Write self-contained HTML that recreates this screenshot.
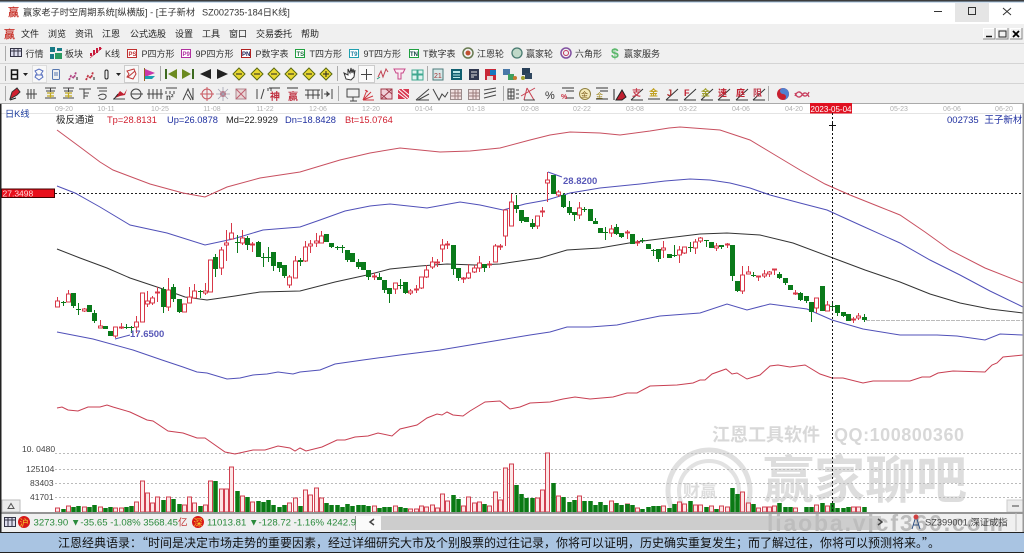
<!DOCTYPE html>
<html lang="zh"><head><meta charset="utf-8"><title>赢家老子时空周期系统</title>
<style>
html,body{margin:0;padding:0;background:#fff;width:1024px;height:553px;overflow:hidden}
svg{display:block;font-family:"Liberation Sans","Noto Sans CJK SC",sans-serif}
.m{font-size:9px;fill:#222}
.t{font-size:9px;fill:#333}
.d{font-size:7px;fill:#b0b0b0}
.i{fill:none;stroke:#444;stroke-width:1}
.r{fill:none;stroke:#c83040;stroke-width:1}
</style></head><body>
<svg width="1024" height="553" viewBox="0 0 1024 553" xmlns="http://www.w3.org/2000/svg">
<rect width="1024" height="553" fill="#fff"/>
<!-- title -->
<rect width="1024" height="1.5" fill="#3c3c3c"/><rect y="1.5" width="1024" height="1" fill="#9dbbd8"/>
<rect x="955" y="3" width="34" height="19" fill="#e5e5e5"/>
<path d="M934 11.5h8" stroke="#333"/><rect x="968.500" y="7.500" width="7" height="7" fill="none" stroke="#333"/><path d="M1003 8l8 7M1011 8l-8 7" stroke="#333" fill="none"/>
<text x="8" y="16" font-size="11" font-weight="700" fill="#c8342c">赢</text>
<text x="23" y="15.500" font-size="9.200" fill="#333">赢家老子时空周期系统[纵横版] - [王子新材</text>
<text x="202" y="15.500" font-size="9.200" fill="#333">SZ002735-184日K线]</text>
<!-- menu & toolbars -->
<rect y="24" width="1024" height="79.500" fill="#f0f0f0"/>
<path d="M0 43.500H1024M0 63.500H1024M0 83.500H1024" stroke="#d4d4d4"/><path d="M0 103.500H1024" stroke="#aaa"/>
<text x="4" y="38" font-size="11" font-weight="700" fill="#c8342c">赢</text>
<text class="m" y="37"><tspan x="21">文件</tspan><tspan x="48">浏览</tspan><tspan x="75">资讯</tspan><tspan x="102">江恩</tspan><tspan x="130">公式选股</tspan><tspan x="175">设置</tspan><tspan x="202">工具</tspan><tspan x="229">窗口</tspan><tspan x="256">交易委托</tspan><tspan x="301">帮助</tspan></text>
<g fill="#f2f2f2"><rect x="983" y="28" width="12" height="11"/><rect x="996" y="28" width="12" height="11"/><rect x="1010" y="28" width="12" height="11"/></g>
<path d="M983.500 39V28.500H995M996.500 39V28.500H1008M1010.500 39V28.500H1022" stroke="#fff" fill="none"/>
<path d="M983 39h12V28M996 39h12V28M1010 39h12V28" stroke="#888" fill="none"/>
<path d="M986 36.500h6" stroke="#111" stroke-width="1.500"/><rect x="999" y="31" width="7" height="6" fill="none" stroke="#222"/><path d="M1013 31l6 6M1019 31l-6 6" stroke="#000" stroke-width="1.800"/>
<!-- toolbar 1 -->
<path d="M5.500 46V61M5.500 66V81M5.500 86V101" stroke="#aaa"/>
<rect x="10.500" y="48.500" width="11" height="8" fill="#dde" stroke="#334"/><path d="M11 51h10M14 49v7M18 49v7" stroke="#334"/>
<rect x="50" y="47" width="5" height="5" fill="#187a86"/><rect x="57" y="48" width="5" height="3" fill="#187a86"/><rect x="50" y="54" width="4" height="5" fill="#187a86"/><rect x="55" y="53" width="7" height="6" fill="#2a9a60"/>
<path d="M91 56V53M94 55V50M97 53V48M100 50V47" stroke="#c81c3c" stroke-width="2"/><path d="M90 58L102 48" stroke="#c81c3c" stroke-width=".6"/>
<g font-size="6" font-weight="700">
<rect x="127.500" y="49.500" width="9" height="8" fill="#fff" stroke="#c03030"/><text x="128.500" y="56" fill="#c03030">PS</text>
<rect x="181.500" y="49.500" width="9" height="8" fill="#fff" stroke="#b030a0"/><text x="182.500" y="56" fill="#b030a0">P9</text>
<rect x="241.500" y="49.500" width="9" height="8" fill="#fff" stroke="#b02020"/><text x="242" y="56" fill="#1a1a50">PN</text>
<rect x="295.500" y="49.500" width="9" height="8" fill="#fff" stroke="#20a040"/><text x="296.500" y="56" fill="#207040">TS</text>
<rect x="349.500" y="49.500" width="9" height="8" fill="#fff" stroke="#20a0b0"/><text x="350.500" y="56" fill="#2080a0">T9</text>
<rect x="409.500" y="49.500" width="9" height="8" fill="#fff" stroke="#20a040"/><text x="410" y="56" fill="#104040">TN</text>
</g>
<circle cx="468" cy="53" r="5" fill="none" stroke="#687a50" stroke-width="1.500"/><circle cx="468" cy="53" r="2.500" fill="#c05030"/>
<circle cx="517" cy="53" r="5" fill="#bfd8c8" stroke="#487a70" stroke-width="1.300"/>
<circle cx="566" cy="53" r="5" fill="none" stroke="#8050a0" stroke-width="1.500"/><circle cx="566" cy="53" r="2.500" fill="none" stroke="#c03060"/>
<text x="611" y="58" font-size="14" font-weight="700" fill="#5cb86c">$</text>
<text class="t" y="57"><tspan x="25.500">行情</tspan><tspan x="65">板块</tspan><tspan x="105">K线</tspan><tspan x="141.500">P四方形</tspan><tspan x="195.500">9P四方形</tspan><tspan x="255.500">P数字表</tspan><tspan x="309.500">T四方形</tspan><tspan x="363.500">9T四方形</tspan><tspan x="423">T数字表</tspan><tspan x="477">江恩轮</tspan><tspan x="526">赢家轮</tspan><tspan x="575">六角形</tspan><tspan x="624">赢家服务</tspan></text>
<!-- toolbar 2 -->
<rect x="32.500" y="65.500" width="14" height="17" fill="#f8f8f8" stroke="#ddd"/>
<rect x="124.500" y="65.500" width="14" height="17" fill="#f8f8f8" stroke="#ccc"/>
<rect x="358.500" y="65.500" width="16" height="17" fill="#fafafa" stroke="#ccc"/>
<path d="M11.500 70h6v9h-6zM11.500 74.500h6" fill="none" stroke="#111" stroke-width="1.500"/>
<path d="M23 73h5l-2.500 3z" fill="#222"/><path d="M116 73h5l-2.500 3z" fill="#222"/>
<path d="M35 71l4-2 4 2-2 3 2 3-4 3-4-3 2-3z" fill="none" stroke="#5870c0"/><path d="M35 75h8" stroke="#5870c0"/>
<rect x="52.500" y="69.500" width="7" height="10" rx="1" fill="none" stroke="#5878b0"/><path d="M54 73h4M54 75h4" stroke="#5878b0"/>
<path d="M69 80l2-4 3 2 2-6" fill="none" stroke="#b04080" stroke-width="1.800" stroke-dasharray="2 1"/><path d="M77 80v-3" stroke="#222"/>
<path d="M86 80l2-4 3 2 2-6" fill="none" stroke="#c03040" stroke-width="1.800" stroke-dasharray="2 1"/><path d="M94 80v-3" stroke="#222"/>
<rect x="105" y="70" width="3" height="9" rx="1.500" fill="none" stroke="#222"/>
<path d="M127 71l7-2 2 5-3 5-6-2 2-3zM128 77l7-6" fill="none" stroke="#c03838"/>
<path d="M144.500 68V81" stroke="#906020"/><path d="M145 69l10 4-10 4z" fill="#c838a8"/><path d="M145 76h10l-3 3h-7z" fill="#18a0b0"/>
<path d="M160.500 66V81M337.500 66V81M427.500 66V81" stroke="#aaa"/>
<path d="M166 69v10" stroke="#3d6a20" stroke-width="2"/><path d="M177 69v10l-9-5z" fill="#6c8a20"/>
<path d="M193 69v10" stroke="#3d6a20" stroke-width="2"/><path d="M182 69v10l9-5z" fill="#6c8a20"/>
<path d="M211 69v10l-11-5z" fill="#222"/><path d="M217 69v10l11-5z" fill="#222"/>
<g fill="#e8d830" stroke="#5a6a10"><path d="M239 68l6 6-6 6-6-6z"/><path d="M257 68l6 6-6 6-6-6z"/><path d="M274 68l6 6-6 6-6-6z"/><path d="M291 68l6 6-6 6-6-6z"/><path d="M309 68l6 6-6 6-6-6z"/><path d="M326 68l6 6-6 6-6-6z"/></g>
<path d="M236 74h6M254 74h6M271 74h6M288 74h6M306 74h6M326 71v6M323 74h6" stroke="#222"/>
<path d="M344 73l2 6 5 1 3-3 1-7-1 3-1-4-1 4-1-5-1 5-2-4v6z" fill="#fff" stroke="#333"/>
<path d="M361 74.500h11M366.500 69v11" stroke="#444"/>
<path d="M378 77l3-6 2 6 3-8 2 3" fill="none" stroke="#c04050"/><path d="M377 79l3-2" stroke="#2a9a80"/>
<path d="M394 69h11l-2 4h-2v6h-3v-6h-2z" fill="#fbeaf2" stroke="#c84888"/>
<path d="M412 70h5v4h-5zM418 70h5v4h-5zM412 75h5v5h-5zM418 75h5v5h-5z" fill="#e0f4f0" stroke="#40a890"/>
<rect x="433" y="69" width="10" height="11" fill="#d8e8e8" stroke="#4a7a7a"/><text x="434" y="78" font-size="7" fill="#a03030">21</text>
<rect x="451" y="69" width="11" height="11" fill="#106070"/><rect x="453" y="71" width="7" height="2" fill="#b8e8e8"/><path d="M453 75h7M453 77.500h7" stroke="#b8e8e8"/>
<rect x="469" y="69" width="10" height="11" fill="#303850"/><path d="M471 72h6M471 75h6M471 77h3" stroke="#e0e0e0"/>
<rect x="485" y="69" width="11" height="11" fill="#c82838"/><rect x="490" y="70" width="6" height="5" fill="#1878c0"/><rect x="487" y="76" width="6" height="4" fill="#e8d8d8"/>
<rect x="503" y="69" width="7" height="6" fill="#4878a8"/><rect x="508" y="74" width="6" height="6" fill="#40a060"/><circle cx="515" cy="78" r="2" fill="#c87830"/>
<rect x="522" y="68" width="8" height="7" fill="#284058"/><rect x="525" y="73" width="7" height="6" fill="#304860"/><circle cx="523" cy="78" r="2" fill="#a0a030"/>
<!-- toolbar 3 -->
<path d="M10 99l2-7 5-4 3 4-3 3z" fill="#d02030" stroke="#333"/><path d="M10 100l6-2" stroke="#222"/>
<g class="i"><path d="M28 89v10M31 89v10M34 89v10M26 94h11"/>
<path d="M45 88h11M46 91h9M50.500 88v4M45 98h11"/><path d="M63 88h11M64 91h9M68.500 88v4M63 98h11"/>
<path d="M79 89h12M84 89v10M84 93h5M84 96h4"/><path d="M97 88h10M99 91h8M98 96c4-3 9-2 8 1s-5 3-7 1"/>
<path d="M113 99h12"/><path d="M131 94h12"/><circle cx="136" cy="94" r="5"/>
<path d="M149 89v10M153 89v10M157 89v10M161 89v10M147 94h16"/>
<path d="M166 88h11M166 91v3M170 91v3M174 91v3"/><path d="M183 100l5-11 5 11M187 94l4 6M193 88v12"/>
<path d="M257 89v10M264 89l-3 10M268 88v3M271 88v3"/>
<path d="M305 90h15M308 90v9M313 90v9M318 90v9M305 95h15"/><path d="M322 89v10M332 89v10M324 94h6M329 94l-2-2v4z"/>
<path d="M347 89h12v8h-12zM353 97v4M350 101h7"/>
<path d="M416 100l13-11M418 100l11-6M416 100h13"/><path d="M433 89l6 11 3-6 3 3 3-5"/>
<path d="M484 90l12-2M484 94l12-3M484 98l12-3"/><path d="M503.500 86V101" stroke="#aaa"/>
<path d="M508 89h6v10h-6zM508 92h6M508 96h6M511 89v10M516 90h3M516 94h3M516 98h3"/></g>
<g fill="none" stroke="#c0a820" stroke-width="1.200"><path d="M47 93h7M50.500 93v5M47 96h7"/><path d="M65 93h7M68.500 93v5M65 96h7"/></g>
<path d="M115 98l5-7 4 3 3-5-2 6-5 1z" fill="#c02030"/><path d="M118 94l-4 5" stroke="#222"/>
<text x="166" y="100" font-size="8" font-weight="700" fill="#444">n²</text>
<circle cx="207" cy="94" r="5" fill="none" stroke="#c85860"/><path d="M200 94h14M207 87v14" stroke="#c85860"/>
<circle cx="223" cy="94" r="3" fill="#c86070"/><path d="M218 89l10 10M228 89l-10 10M216 94h14M223 87v14" stroke="#a0a0b0" stroke-width=".8"/>
<rect x="236" y="89" width="10" height="10" fill="#e8d8d8" stroke="#b08890"/><path d="M236 89l10 10M246 89l-10 10" stroke="#c06070"/>
<g font-size="10" font-weight="700" fill="#c03040"><text x="270" y="100">神</text><text x="288" y="100">赢</text></g>
<path d="M269 88h11M287 88h11" stroke="#333"/>
<path d="M363 100l4-10M363 100l8-8M363 100l10-4M363 100h11M365 90l3 2" stroke="#d03840" fill="none"/>
<rect x="381" y="89" width="11" height="10" fill="#f0d0d8" stroke="#a03848"/><path d="M381 99l11-10M381 94l6 5M386 89l6 5" stroke="#a03848"/>
<rect x="398" y="89" width="11" height="10" fill="#d83850"/><path d="M398 89l11 10M398 93l8 6M402 89l7 6" stroke="#fff"/>
<g fill="#f0e0e0" stroke="#9a8a8a"><rect x="450.500" y="89.500" width="11" height="10"/><rect x="468.500" y="89.500" width="11" height="10"/></g>
<path d="M451 93h10M451 96h10M455 90v9M458 90v9M469 93h10M469 96h10M473 90v9M476 90v9" stroke="#9a7a7a"/>
<path d="M527 88l-3 12M527 88l7 12M521 96l14-8" fill="none" stroke="#c84050"/><path d="M524 100h11" stroke="#444"/>
<text x="545" y="99" font-size="11" fill="#333">%</text>
<path d="M562 88h12M566 91h8M566 98h8" stroke="#333"/><text x="561" y="99" font-size="7" font-weight="700" fill="#c83040">%</text>
<circle cx="585" cy="94" r="5.500" fill="#f4eab8" stroke="#908040"/><text x="581" y="97" font-size="7" fill="#806020">金</text>
<path d="M596 88h12M600 91h8M596 99h12" stroke="#333"/><text x="596" y="98" font-size="7" fill="#a08820">金</text>
<path d="M614 89v11M616 100l6-10 4 7-4 3z" fill="#c02030" stroke="#222"/>
<g fill="none" stroke="#333"><path d="M631 100l12-11M631 100h12"/><path d="M648 99h12"/><path d="M666 100l12-11M666 100h12"/><path d="M684 100l12-11M684 100h12"/><path d="M701 100l12-11M701 100h12"/><path d="M718 100l12-11M718 100h12"/><path d="M736 100l12-11M736 100h12"/><path d="M753 100l12-11M753 100h12"/></g>
<g font-size="9" font-weight="700"><text x="632" y="96" fill="#c84050">支</text><text x="649" y="96" fill="#c0a020">金</text><text x="667" y="96" fill="#b03030">J</text><text x="684" y="96" fill="#c02030">F</text><text x="701" y="96" fill="#a0a030">金</text><text x="718" y="96" fill="#c02030">速</text><text x="736" y="96" fill="#c02030">庭</text><text x="753" y="96" fill="#c04050">阻</text></g>
<path d="M768.500 86V101" stroke="#aaa"/><path d="M338.500 86V101" stroke="#aaa"/>
<circle cx="783" cy="94" r="6" fill="#c82030"/><path d="M783 88a6 6 0 0 1 0 12a3 3 0 0 0 0-6a3 3 0 0 1 0-6" fill="#5080d0"/>
<path d="M795 96c2-5 5-5 7-2s5 3 7-2M795 93c2 5 5 5 7 2s5-3 7 2" fill="none" stroke="#c84060" stroke-width="1.300"/>
<!-- date axis -->
<g class="d" text-anchor="middle"><text x="64" y="111">09-20</text><text x="106" y="111">10-11</text><text x="160" y="111">10-25</text><text x="212" y="111">11-08</text><text x="265" y="111">11-22</text><text x="318" y="111">12-06</text><text x="371" y="111">12-20</text><text x="424" y="111">01-04</text><text x="476" y="111">01-18</text><text x="530" y="111">02-08</text><text x="582" y="111">02-22</text><text x="635" y="111">03-08</text><text x="688" y="111">03-22</text><text x="741" y="111">04-06</text><text x="794" y="111">04-20</text><text x="899" y="111">05-23</text><text x="952" y="111">06-06</text><text x="1004" y="111">06-20</text></g>
<path d="M0 113.500H1024" stroke="#e4e4e4"/>
<rect x="810" y="103" width="42" height="10.500" fill="#e01020"/><text x="810.500" y="112" font-size="8.500" fill="#fff" textLength="41" lengthAdjust="spacingAndGlyphs">2023-05-04</text>
<!-- headers -->
<text x="5" y="117" font-size="9.200" fill="#2040a0">日K线</text>
<text x="56" y="123" font-size="9.500" fill="#222">极反通道</text>
<g font-size="9.300"><text x="107" y="123" fill="#d02030">Tp=28.8131</text><text x="167" y="123" fill="#2030a0">Up=26.0878</text><text x="226" y="123" fill="#222">Md=22.9929</text><text x="285" y="123" fill="#2030a0">Dn=18.8428</text><text x="345" y="123" fill="#d02030">Bt=15.0764</text></g>
<text x="947" y="123" font-size="9.500" fill="#2030a0">002735 <tspan dx="3">王子新材</tspan></text>
<!-- watermark -->
<text x="712" y="441" font-size="18" font-weight="700" fill="#d8d8d8">江恩工具软件</text><text x="834" y="441" font-size="18" font-weight="700" fill="#d8d8d8" textLength="130">QQ:100800360</text>
<text x="763" y="498" font-size="51" font-weight="700" fill="#dddddd">赢家聊吧</text>
<circle cx="709" cy="491" r="41" fill="none" stroke="#e0e0e0" stroke-width="5"/><circle cx="709" cy="491" r="30" fill="none" stroke="#e2e2e2" stroke-width="4"/>
<text x="683" y="497" font-size="17" font-weight="700" fill="#dddddd">财赢</text>
<!-- grid lines -->
<g fill="none" stroke="#bbb" stroke-dasharray="2 2"><path d="M55 453.500H1024M55 469.500H1024M55 483.500H1024M55 497.500H1024"/></g>
<path d="M866 320.500H1024" stroke="#bbb" stroke-dasharray="4 1"/>
<path d="M55 193.500H1024" stroke="#222" stroke-dasharray="2 2"/>
<rect x="1.500" y="189" width="53" height="8.500" fill="#e8101c" stroke="#400"/><text x="2.500" y="196.500" font-size="8.500" fill="#ffd8d8">27.3498</text>
<g font-size="8.500" fill="#444"><text x="22" y="452">10. 0480</text><text x="26" y="472">125104</text><text x="30" y="486">83403</text><text x="30" y="500">41701</text></g>
<!-- bands -->
<g fill="none" stroke-width="1">
<path stroke="#c85060" d="M57 130L80 147 100 162 113 170 150 184 183 193 205 197 227 187 260 178 300 172 340 160 370 153 400 148 420 150 440 152 470 151 500 148 530 140 550 135 570 132 600 133 620 135 650 131 669 128 680 127 720 130 750 140 775 155 800 170 825 184 850 195 880 207 900 215 925 232 950 250 985 268 1023 283"/>
<path stroke="#5050b8" d="M57 186L75 193 100 207 130 225 167 233 205 245 233 239 263 230 300 227 320 220 345 211 370 206 390 204 427 208 460 202 480 205 503 210 525 204 547 200 570 193 600 188 640 184 665 181 690 179 710 180 730 183 750 188 770 195 800 203 827 210 860 225 900 243 930 260 960 275 990 291 1023 307"/>
<path stroke="#333" d="M57 249L80 258 107 268 130 278 160 288 185 297 207 300 235 296 260 292 300 291 335 282 367 275 390 269 420 266 447 264 475 265 500 264 520 261 540 258 567 250 600 248 635 242 667 238 700 234 727 233 760 235 793 243 833 258 865 270 900 282 930 294 960 303 990 309 1023 313"/>
<path stroke="#5050b8" d="M57 332L93 339 133 350 162 360 183 367 197 372 207 373 227 379 240 378 253 375 267 374 278 372 293 374 300 372 320 370 335 364 363 360 400 355 440 350 470 345 500 340 530 335 550 332 567 327 590 327 617 325 640 320 660 316 700 313 727 304 747 310 770 304 807 309 832 320 863 329 900 335 937 335 957 336 985 340 1000 334 1023 335"/>
<path stroke="#c83f52" d="M57 408L62 407 68 410 78 411 88 407 100 407 107 405 113 407 130 412 147 420 153 421 168 431 183 433 197 438 205 438 225 452 235 454 253 450 265 450 278 446 290 448 295 451 300 448 306 451 322 447 337 440 345 440 355 437 368 436 378 433 392 436 400 429 417 425 427 418 437 414 442 415 447 412 453 415 463 416 470 411 485 402 500 401 510 409 520 407 530 403 550 402 563 399 575 397 590 399 613 397 627 393 637 393 650 386 677 385 693 383 700 380 705 380 712 374 726 369 732 374 737 373 747 379 760 375 770 366 778 365 790 367 805 365 820 374 832 378 843 378 863 383 873 381 910 381 922 377 930 377 938 373 953 371 985 372 992 365 997 363 1003 357 1023 355"/>
</g>
<!-- volume -->
<path fill="#fde6e6" stroke="#d04050" d="M55.500 508h4V512h-4zM66.500 506h4V512h-4zM82.500 507h4V512h-4zM98.500 507h4V512h-4zM113.500 508h4V512h-4zM119.500 508h4V512h-4zM134.500 502h4V512h-4zM140.500 481h4V512h-4zM145.500 493h4V512h-4zM150.500 503h4V512h-4zM155.500 497h4V512h-4zM166.500 497h4V512h-4zM182.500 505h4V512h-4zM187.500 497h4V512h-4zM192.500 503h4V512h-4zM203.500 505h4V512h-4zM208.500 481h4V512h-4zM219.500 489h4V512h-4zM224.500 489h4V512h-4zM229.500 467h4V512h-4zM240.500 496h4V512h-4zM250.500 502h4V512h-4zM287.500 503h4V512h-4zM293.500 498h4V512h-4zM303.500 490h4V512h-4zM308.500 495h4V512h-4zM314.500 488h4V512h-4zM319.500 498h4V512h-4zM372.500 506h4V512h-4zM393.500 506h4V512h-4zM408.500 509h4V512h-4zM414.500 509h4V512h-4zM419.500 506h4V512h-4zM424.500 507h4V512h-4zM430.500 505h4V512h-4zM435.500 508h4V512h-4zM440.500 494h4V512h-4zM445.500 501h4V512h-4zM461.500 506h4V512h-4zM466.500 497h4V512h-4zM472.500 503h4V512h-4zM477.500 502h4V512h-4zM487.500 506h4V512h-4zM493.500 492h4V512h-4zM498.500 500h4V512h-4zM503.500 468h4V512h-4zM509.500 464h4V512h-4zM535.500 498h4V512h-4zM540.500 490h4V512h-4zM545.500 453h4V512h-4zM556.500 496h4V512h-4zM577.500 496h4V512h-4zM609.500 501h4V512h-4zM625.500 504h4V512h-4zM635.500 508h4V512h-4zM661.500 506h4V512h-4zM677.500 502h4V512h-4zM682.500 504h4V512h-4zM693.500 505h4V512h-4zM698.500 505h4V512h-4zM709.500 506h4V512h-4zM719.500 506h4V512h-4zM725.500 507h4V512h-4zM740.500 492h4V512h-4zM746.500 503h4V512h-4zM756.500 508h4V512h-4zM762.500 507h4V512h-4zM767.500 507h4V512h-4zM772.500 506h4V512h-4zM793.500 508h4V512h-4zM814.500 505h4V512h-4zM825.500 506h4V512h-4zM851.500 507h4V512h-4zM856.500 507h4V512h-4z"/>
<path fill="none" stroke="#0a7a14" stroke-width="4.500" d="M63.500 509V512M73.500 507V512M78.500 506V512M89.500 507V512M94.500 505V512M105.500 508V512M110.500 507V512M126.500 507V512M131.500 506V512M163.500 500V512M173.500 499V512M179.500 504V512M200.500 506V512M215.500 481V512M237.500 491V512M247.500 497V512M258.500 501V512M263.500 502V512M268.500 500V512M273.500 505V512M279.500 507V512M284.500 505V512M300.500 506V512M326.500 503V512M331.500 505V512M337.500 505V512M342.500 507V512M347.500 504V512M352.500 506V512M358.500 505V512M363.500 505V512M368.500 506V512M379.500 508V512M384.500 507V512M389.500 507V512M400.500 507V512M405.500 508V512M453.500 495V512M458.500 499V512M484.500 504V512M516.500 485V512M521.500 494V512M526.500 498V512M532.500 498V512M553.500 483V512M563.500 497V512M569.500 502V512M574.500 500V512M584.500 501V512M590.500 501V512M595.500 505V512M600.500 502V512M605.500 505V512M616.500 503V512M621.500 505V512M627.500 504V512M632.500 505V512M642.500 509V512M648.500 507V512M653.500 506V512M658.500 506V512M669.500 508V512M674.500 504V512M690.500 501V512M706.500 507V512M716.500 509V512M732.500 488V512M737.500 494V512M753.500 504V512M779.500 503V512M785.500 507V512M790.500 507V512M806.500 507V512M811.500 507V512M822.500 503V512M832.500 503V512M837.500 508V512M843.500 508V512M848.500 507V512M864.500 507V512"/>
<!-- green candles -->
<path fill="none" stroke="#0a7a1a" d="M63.500 301V306M73.500 293V308M78.500 303V315M89.500 305V312M94.500 310V323M105.500 326V329M110.500 331V336M126.500 324V329M131.500 326V333M163.500 287V313M173.500 284V302M179.500 299V313M200.500 290V298M215.500 254V277M237.500 235V253M247.500 236V250M258.500 241V257M263.500 253V267M268.500 247V262M273.500 252V271M279.500 262V272M284.500 265V278M300.500 258V266M326.500 234V242M331.500 243V248M337.500 246V250M342.500 245V253M347.500 250V262M352.500 253V262M358.500 259V269M363.500 262V270M368.500 270V280M379.500 273V280M384.500 280V293M389.500 288V303M400.500 279V289M405.500 282V294M453.500 245V275M458.500 268V281M484.500 264V272M516.500 195V213M521.500 210V223M526.500 217V222M532.500 219V229M553.500 175V194M563.500 193V208M569.500 201V215M574.500 212V221M584.500 207V212M590.500 209V221M595.500 218V224M600.500 228V233M605.500 227V240M616.500 224V235M621.500 233V238M632.500 234V244M642.500 238V243M648.500 244V249M653.500 249V256M658.500 249V262M669.500 254V258M674.500 245V257M690.500 242V252M706.500 240V247M711.500 242V248M721.500 245V249M732.500 245V281M737.500 281V292M753.500 272V277M779.500 272V279M785.500 278V285M790.500 285V290M800.500 292V301M806.500 296V303M811.500 302V322M822.500 286V311M832.500 303V309M837.500 305V316M843.500 312V317M848.500 314V321M864.500 314V322"/>
<path fill="none" stroke="#0a7a1a" stroke-width="5" d="M63.500 302V303M73.500 293V306M78.500 309V310M89.500 305V312M94.500 313V321M105.500 326V329M110.500 331V336M126.500 327V328M131.500 327V328M163.500 289V307M173.500 287V299M179.500 299V312M200.500 291V292M215.500 257V269M237.500 242V243M247.500 238V245M258.500 242V257M263.500 257V258M268.500 257V258M273.500 252V266M279.500 262V268M284.500 265V276M300.500 260V262M326.500 234V242M331.500 243V247M337.500 247V248M342.500 247V248M347.500 250V260M352.500 253V262M358.500 262V267M363.500 262V270M368.500 270V277M379.500 277V280M384.500 280V290M389.500 288V294M400.500 285V286M405.500 282V293M453.500 245V269M458.500 268V278M484.500 264V268M516.500 205V209M521.500 210V221M526.500 217V222M532.500 223V227M553.500 175V194M563.500 195V207M569.500 207V213M574.500 212V215M584.500 209V210M590.500 209V221M595.500 221V224M600.500 228V233M605.500 232V233M616.500 227V234M621.500 233V237M632.500 234V244M642.500 240V241M648.500 244V249M653.500 250V251M658.500 249V259M669.500 254V258M674.500 255V256M690.500 247V248M706.500 240V241M711.500 242V248M721.500 245V247M732.500 245V276M737.500 281V291M753.500 275V276M779.500 274V278M785.500 278V283M790.500 285V290M800.500 293V300M806.500 296V301M811.500 302V312M822.500 286V311M832.500 306V307M837.500 305V313M843.500 312V316M848.500 314V321M864.500 317V320"/>
<!-- red candles -->
<path fill="none" stroke="#d83848" d="M57.500 297V307M68.500 290V302M84.500 308V312M100.500 320V328M115.500 327V338M121.500 323V329M136.500 316V333M142.500 293V322M147.500 291V307M152.500 296V305M157.500 287V302M168.500 278V311M184.500 304V312M189.500 287V303M194.500 284V298M205.500 283V295M210.500 260V292M221.500 247V275M226.500 230V261M231.500 223V239M242.500 230V245M252.500 242V252M289.500 275V288M295.500 256V278M305.500 241V262M310.500 240V253M316.500 233V247M321.500 231V243M374.500 273V280M395.500 283V294M410.500 289V295M416.500 285V293M421.500 277V289M426.500 265V278M432.500 257V269M437.500 259V267M442.500 239V262M447.500 241V249M463.500 277V283M468.500 264V279M474.500 265V273M479.500 256V272M489.500 261V268M495.500 244V262M500.500 244V250M505.500 210V246M511.500 194V226M537.500 216V229M542.500 207V217M547.500 172V202M558.500 190V197M579.500 202V219M611.500 225V237M627.500 230V239M637.500 240V246M663.500 241V258M679.500 246V263M684.500 247V254M695.500 239V254M700.500 237V243M716.500 243V251M727.500 243V248M742.500 266V294M748.500 266V274M758.500 276V281M764.500 270V278M769.500 271V277M774.500 269V275M795.500 290V295M816.500 298V313M827.500 301V311M853.500 317V323M858.500 313V320"/>
<path fill="#fff" stroke="#d83848" d="M55.500 301h4V307h-4zM66.500 294h4V302h-4zM82.500 309h4V311h-4zM98.500 326h4V328h-4zM113.500 327h4V336h-4zM119.500 327h4V328h-4zM134.500 322h4V327h-4zM140.500 293h4V322h-4zM145.500 301h4V304h-4zM150.500 298h4V303h-4zM155.500 292h4V293h-4zM166.500 290h4V307h-4zM182.500 304h4V312h-4zM187.500 297h4V303h-4zM192.500 291h4V298h-4zM203.500 291h4V293h-4zM208.500 260h4V292h-4zM219.500 250h4V268h-4zM224.500 243h4V245h-4zM229.500 233h4V239h-4zM240.500 238h4V243h-4zM250.500 244h4V245h-4zM287.500 277h4V285h-4zM293.500 261h4V278h-4zM303.500 247h4V261h-4zM308.500 244h4V246h-4zM314.500 241h4V243h-4zM319.500 236h4V243h-4zM372.500 276h4V277h-4zM393.500 283h4V289h-4zM408.500 291h4V293h-4zM414.500 289h4V290h-4zM419.500 277h4V288h-4zM424.500 270h4V277h-4zM430.500 262h4V267h-4zM435.500 262h4V263h-4zM440.500 245h4V249h-4zM445.500 244h4V245h-4zM461.500 278h4V279h-4zM466.500 273h4V278h-4zM472.500 268h4V272h-4zM477.500 263h4V268h-4zM487.500 264h4V265h-4zM493.500 246h4V262h-4zM498.500 246h4V247h-4zM503.500 210h4V236h-4zM509.500 202h4V226h-4zM535.500 216h4V226h-4zM540.500 211h4V212h-4zM545.500 180h4V183h-4zM556.500 192h4V195h-4zM577.500 208h4V215h-4zM609.500 229h4V233h-4zM625.500 232h4V233h-4zM635.500 242h4V243h-4zM661.500 248h4V250h-4zM677.500 250h4V255h-4zM682.500 247h4V253h-4zM693.500 242h4V248h-4zM698.500 238h4V241h-4zM714.500 246h4V248h-4zM725.500 244h4V245h-4zM740.500 275h4V291h-4zM746.500 272h4V274h-4zM756.500 276h4V277h-4zM762.500 274h4V276h-4zM767.500 272h4V274h-4zM772.500 269h4V270h-4zM793.500 293h4V294h-4zM814.500 298h4V308h-4zM825.500 305h4V311h-4zM851.500 319h4V320h-4zM856.500 316h4V318h-4z"/>
<!-- high low labels -->
<path d="M115 339L130 335M548 172L562 177" fill="none" stroke="#5050b8"/>
<text x="130" y="337" font-size="9.500" font-weight="700" fill="#5858b8">17.6500</text>
<text x="563" y="184" font-size="9.500" font-weight="700" fill="#5858b8">28.8200</text>
<!-- crosshair -->
<path d="M832.500 113V512" stroke="#111" stroke-dasharray="2 2"/><path d="M829 125.500h7M832.500 122v7" stroke="#111"/>
<!-- left/right buttons -->
<rect x="2" y="500" width="18" height="12" fill="#ececec" stroke="#bbb"/><path d="M8 508.500h6l-3-5z" fill="none" stroke="#555"/>
<rect x="1007" y="500" width="17" height="12" fill="#ececec" stroke="#ccc"/><path d="M1012 506h7" stroke="#444"/>
<!-- status bar -->
<rect y="512" width="1024" height="20" fill="#f0f0f0"/>
<path d="M0 513H1024" stroke="#777" stroke-width="1.500"/>
<rect x="381" y="516" width="500" height="14" fill="#cdcdcd"/>
<text x="767" y="531" font-size="23" font-weight="700" fill="#bdbdbd" textLength="236">liaoba.vjcf360.com</text>
<rect x="355" y="516" width="26" height="14" fill="#fafafa"/><path d="M355.500 516V530" stroke="#999"/>
<path d="M374 519l-4 3 4 3" fill="none" stroke="#444" stroke-width="1.500"/><path d="M878 519l4 3-4 3" fill="none" stroke="#444" stroke-width="1.500"/>
<rect x="4.500" y="517.500" width="11" height="9" fill="#dde" stroke="#334"/><path d="M5 520h10M8 518v8M12 518v8" stroke="#334"/>
<circle cx="24" cy="522" r="6" fill="#d81818"/><text x="19.500" y="526" font-size="9" fill="#f8d030">沪</text>
<circle cx="198" cy="522" r="6" fill="#d81818"/><text x="193.500" y="526" font-size="9" fill="#f8d030">深</text>
<g font-size="9.600" fill="#2a8a3c"><text x="33.500" y="525.500">3273.90 ▼-35.65 -1.08% 3568.45<tspan fill="#c03030">亿</tspan></text><text x="207" y="525.500">11013.81 ▼-128.72 -1.16% 4242.9</text></g>
<path d="M916 516l-4 13M916 516l4 13M913 525h6" stroke="#305080" fill="none"/><circle cx="916" cy="517" r="2.500" fill="#d04040"/>
<text x="925" y="525.500" font-size="9.300" fill="#444">SZ399001,深证成指</text>
<path d="M1016 513v18" stroke="#bbb" fill="none"/>
<!-- window left/right borders -->
<rect x="0" y="104" width="1.500" height="428" fill="#222"/><rect x="1022.500" y="104" width="1.500" height="428" fill="#999"/>
<!-- footer -->
<rect y="532" width="1024" height="21" fill="#a9c4e2"/>
<path d="M0 532.500H1024" stroke="#222"/><path d="M0 552.500H1024" stroke="#222"/>
<text x="58" y="547" font-size="12" fill="#111" style="font-family:'Noto Sans CJK SC',sans-serif">江恩经典语录：“时间是决定市场走势的重要因素，经过详细研究大市及个别股票的过往记录，你将可以证明，历史确实重复发生；而了解过往，你将可以预测将来。”。</text>
</svg>
</body></html>
